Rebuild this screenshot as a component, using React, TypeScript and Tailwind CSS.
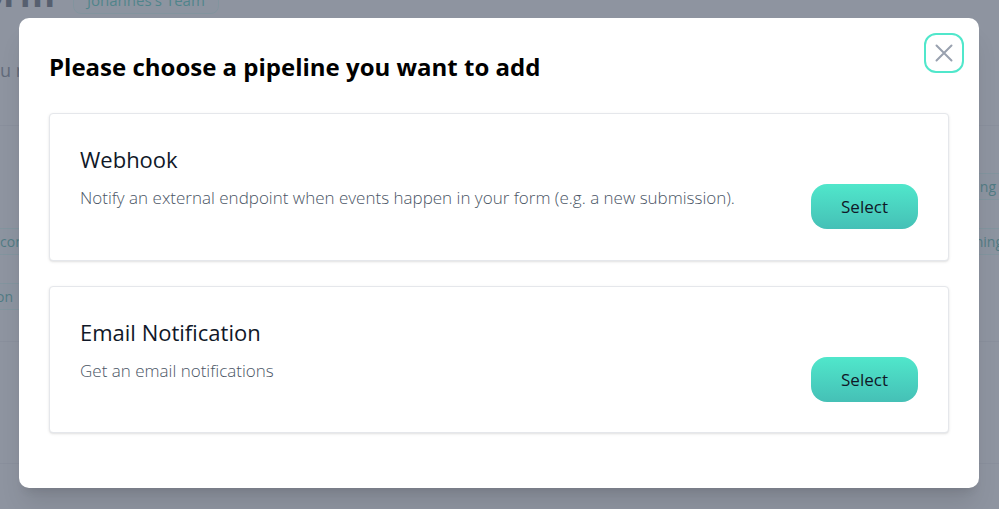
import React from "react";

type Pipeline = { id: string; title: string; description: string };

const pipelines: Pipeline[] = [
  {
    id: "webhook",
    title: "Webhook",
    description:
      "Notify an external endpoint when events happen in your form (e.g. a new submission).",
  },
  {
    id: "email",
    title: "Email Notification",
    description: "Get an email notifications",
  },
];

function Chip({ children, className }: { children: React.ReactNode; className: string }) {
  return (
    <span
      className={`flex h-[27px] items-center border-y border-teal-100 bg-teal-50/50 text-sm whitespace-nowrap text-teal-600 ${className}`}
    >
      {children}
    </span>
  );
}

function PageBehind() {
  return (
    <div aria-hidden="true" className="h-screen overflow-hidden bg-gray-50">
      <div className="flex h-[14px] items-end gap-[18px]">
        <div className="flex w-[55px] justify-end overflow-hidden pb-1 text-4xl leading-[32px] font-bold text-gray-800">
          Form
        </div>
        <div className="flex h-7 items-center rounded-lg border border-teal-100 bg-teal-50/50 px-[13px] text-[15px] text-teal-500">
          Johannes's Team
        </div>
      </div>
      <div className="flex h-[111px] items-center text-lg text-gray-600">u n</div>
      <div className="flex h-[217px] justify-between border-y border-gray-200">
        <div className="flex flex-col gap-7 pt-[102px]">
          <Chip className="w-10">con</Chip>
          <Chip className="w-10">
            <span className="-ml-1">on</span>
          </Chip>
        </div>
        <div className="flex flex-col items-end gap-7 pt-[47px]">
          <Chip className="pr-[3px] pl-3">ng</Chip>
          <Chip className="-mr-1 pl-1">ning</Chip>
        </div>
      </div>
      <div className="h-[122px] border-b border-gray-200" />
    </div>
  );
}

function PipelineCard({ pipeline }: { pipeline: Pipeline }) {
  return (
    <li className="rounded border border-gray-200 bg-white px-[30px] pt-[30px] pb-[31px] shadow-sm last:pb-[30px]">
      <h3 id={pipeline.id} className="text-[22px] leading-[30px] font-medium text-gray-900">
        {pipeline.title}
      </h3>
      <div className="mt-[10px] flex items-start justify-between gap-6">
        <p className="text-[17px] leading-7 font-light text-gray-600">{pipeline.description}</p>
        <button
          type="button"
          aria-describedby={pipeline.id}
          className="h-[45px] w-[107px] shrink-0 rounded-2xl bg-linear-to-b from-[#50e7cb] to-[#45c0b6] text-[17px] font-medium text-gray-900"
        >
          Select
        </button>
      </div>
    </li>
  );
}

export default function App() {
  return (
    <div className="relative overflow-hidden font-['Open_Sans','Noto_Sans',sans-serif]">
      <PageBehind />
      <div className="absolute inset-0 bg-gray-500/75 px-5 pt-[18px] pl-[19px]">
        <section
          role="dialog"
          aria-modal="true"
          aria-labelledby="dialog-title"
          className="rounded-[10px] bg-white px-[30px] pt-[15px] pb-[55px] shadow-xl"
        >
          <header className="-mr-[15px] flex items-start justify-between">
            <h2 id="dialog-title" className="pt-4 text-2xl leading-9 font-bold text-black">
              Please choose a pipeline you want to add
            </h2>
            <button
              type="button"
              aria-label="Close"
              className="flex size-10 items-center justify-center rounded-xl border-2 border-[#50e7cb] text-gray-400"
            >
              <svg viewBox="0 0 30 30" className="size-[30px]" fill="none" stroke="currentColor" strokeWidth="2" strokeLinecap="round">
                <path d="M7.5 22.5 22.5 7.5M7.5 7.5l15 15" />
              </svg>
            </button>
          </header>
          <ul className="mt-7 flex flex-col gap-[25px]">
            {pipelines.map((p) => (
              <PipelineCard key={p.id} pipeline={p} />
            ))}
          </ul>
        </section>
      </div>
    </div>
  );
}
